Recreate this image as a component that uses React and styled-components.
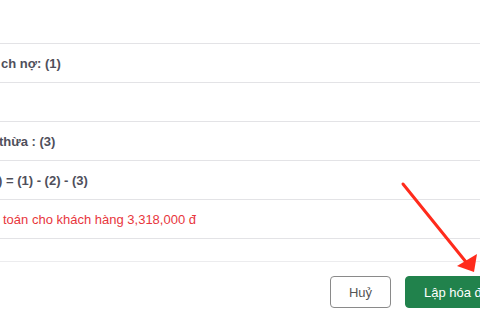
import React from "react";
import styled, { createGlobalStyle } from "styled-components";

const GlobalStyle = createGlobalStyle`
  html, body {
    margin: 0;
    padding: 0;
    background: #ffffff;
  }
  body {
    font-family: "Liberation Sans", Arial, Helvetica, sans-serif;
  }
`;

// Viewport wrapper: the modal is wider than the window, so clip it
const Viewport = styled.div`
  position: relative;
  width: 480px;
  height: 316px;
  overflow: hidden;
  background: #ffffff;
`;

const Modal = styled.div`
  margin-right: -40px;
  padding-top: 43px;
`;

const SummaryList = styled.div`
  display: flex;
  flex-direction: column;
`;

const Row = styled.div`
  height: 38px;
  border-top: 1px solid #e3e3e6;
  display: flex;
  align-items: center;
`;

const Spacer = styled.div`
  height: 22px;
  border-top: 1px solid #e3e3e6;
`;

const Label = styled.span`
  font-size: 13px;
  white-space: nowrap;
  margin-left: ${({ $indent }) => $indent}px;
  font-weight: ${({ $danger }) => ($danger ? 400 : 700)};
  color: ${({ $danger }) => ($danger ? "#e8363c" : "#4f4f5b")};
`;

const Footer = styled.div`
  border-top: 1px solid #ececee;
  padding: 14px 0 0;
  display: flex;
  justify-content: flex-end;
  gap: 14px;
`;

const Button = styled.button`
  height: 32px;
  border-radius: 4px;
  font-family: inherit;
  font-size: 13px;
  cursor: pointer;
  box-sizing: border-box;
`;

const CancelButton = styled(Button)`
  width: 61px;
  background: #ffffff;
  border: 1px solid #8a8a8a;
  color: #555555;
`;

const SubmitButton = styled(Button)`
  width: 115px;
  padding: 0 18px;
  text-align: left;
  white-space: nowrap;
  background: #21824c;
  border: 1px solid #21824c;
  color: #ffffff;
`;

const Annotation = styled.svg`
  position: absolute;
  top: 0;
  left: 0;
  pointer-events: none;
`;

const rows = [
  { text: "ch nợ: (1)", indent: 1 },
  { text: "", indent: 0 },
  { text: "thừa : (3)", indent: -1 },
  { text: ") = (1) - (2) - (3)", indent: -2 },
  { text: "toán cho khách hàng 3,318,000 đ", indent: 3, danger: true },
];

const App = () => {
  return (
    <>
      <GlobalStyle />
      <Viewport>
        <Modal>
          <SummaryList>
            {rows.map((r, i) => (
              <Row key={i}>
                <Label $indent={r.indent} $danger={r.danger}>
                  {r.text}
                </Label>
              </Row>
            ))}
            <Spacer />
          </SummaryList>
          <Footer>
            <CancelButton>Huỷ</CancelButton>
            <SubmitButton>Lập hóa đơn</SubmitButton>
          </Footer>
        </Modal>

        {/* red arrow pointing at the submit button */}
        <Annotation width="480" height="316" viewBox="0 0 480 316">
          <line
            x1="403"
            y1="184"
            x2="466"
            y2="262"
            stroke="#ff2b1c"
            strokeWidth="3"
            strokeLinecap="round"
          />
          <polygon points="474,272 457,266 477,254" fill="#ff2b1c" />
        </Annotation>
      </Viewport>
    </>
  );
};

export default App;
